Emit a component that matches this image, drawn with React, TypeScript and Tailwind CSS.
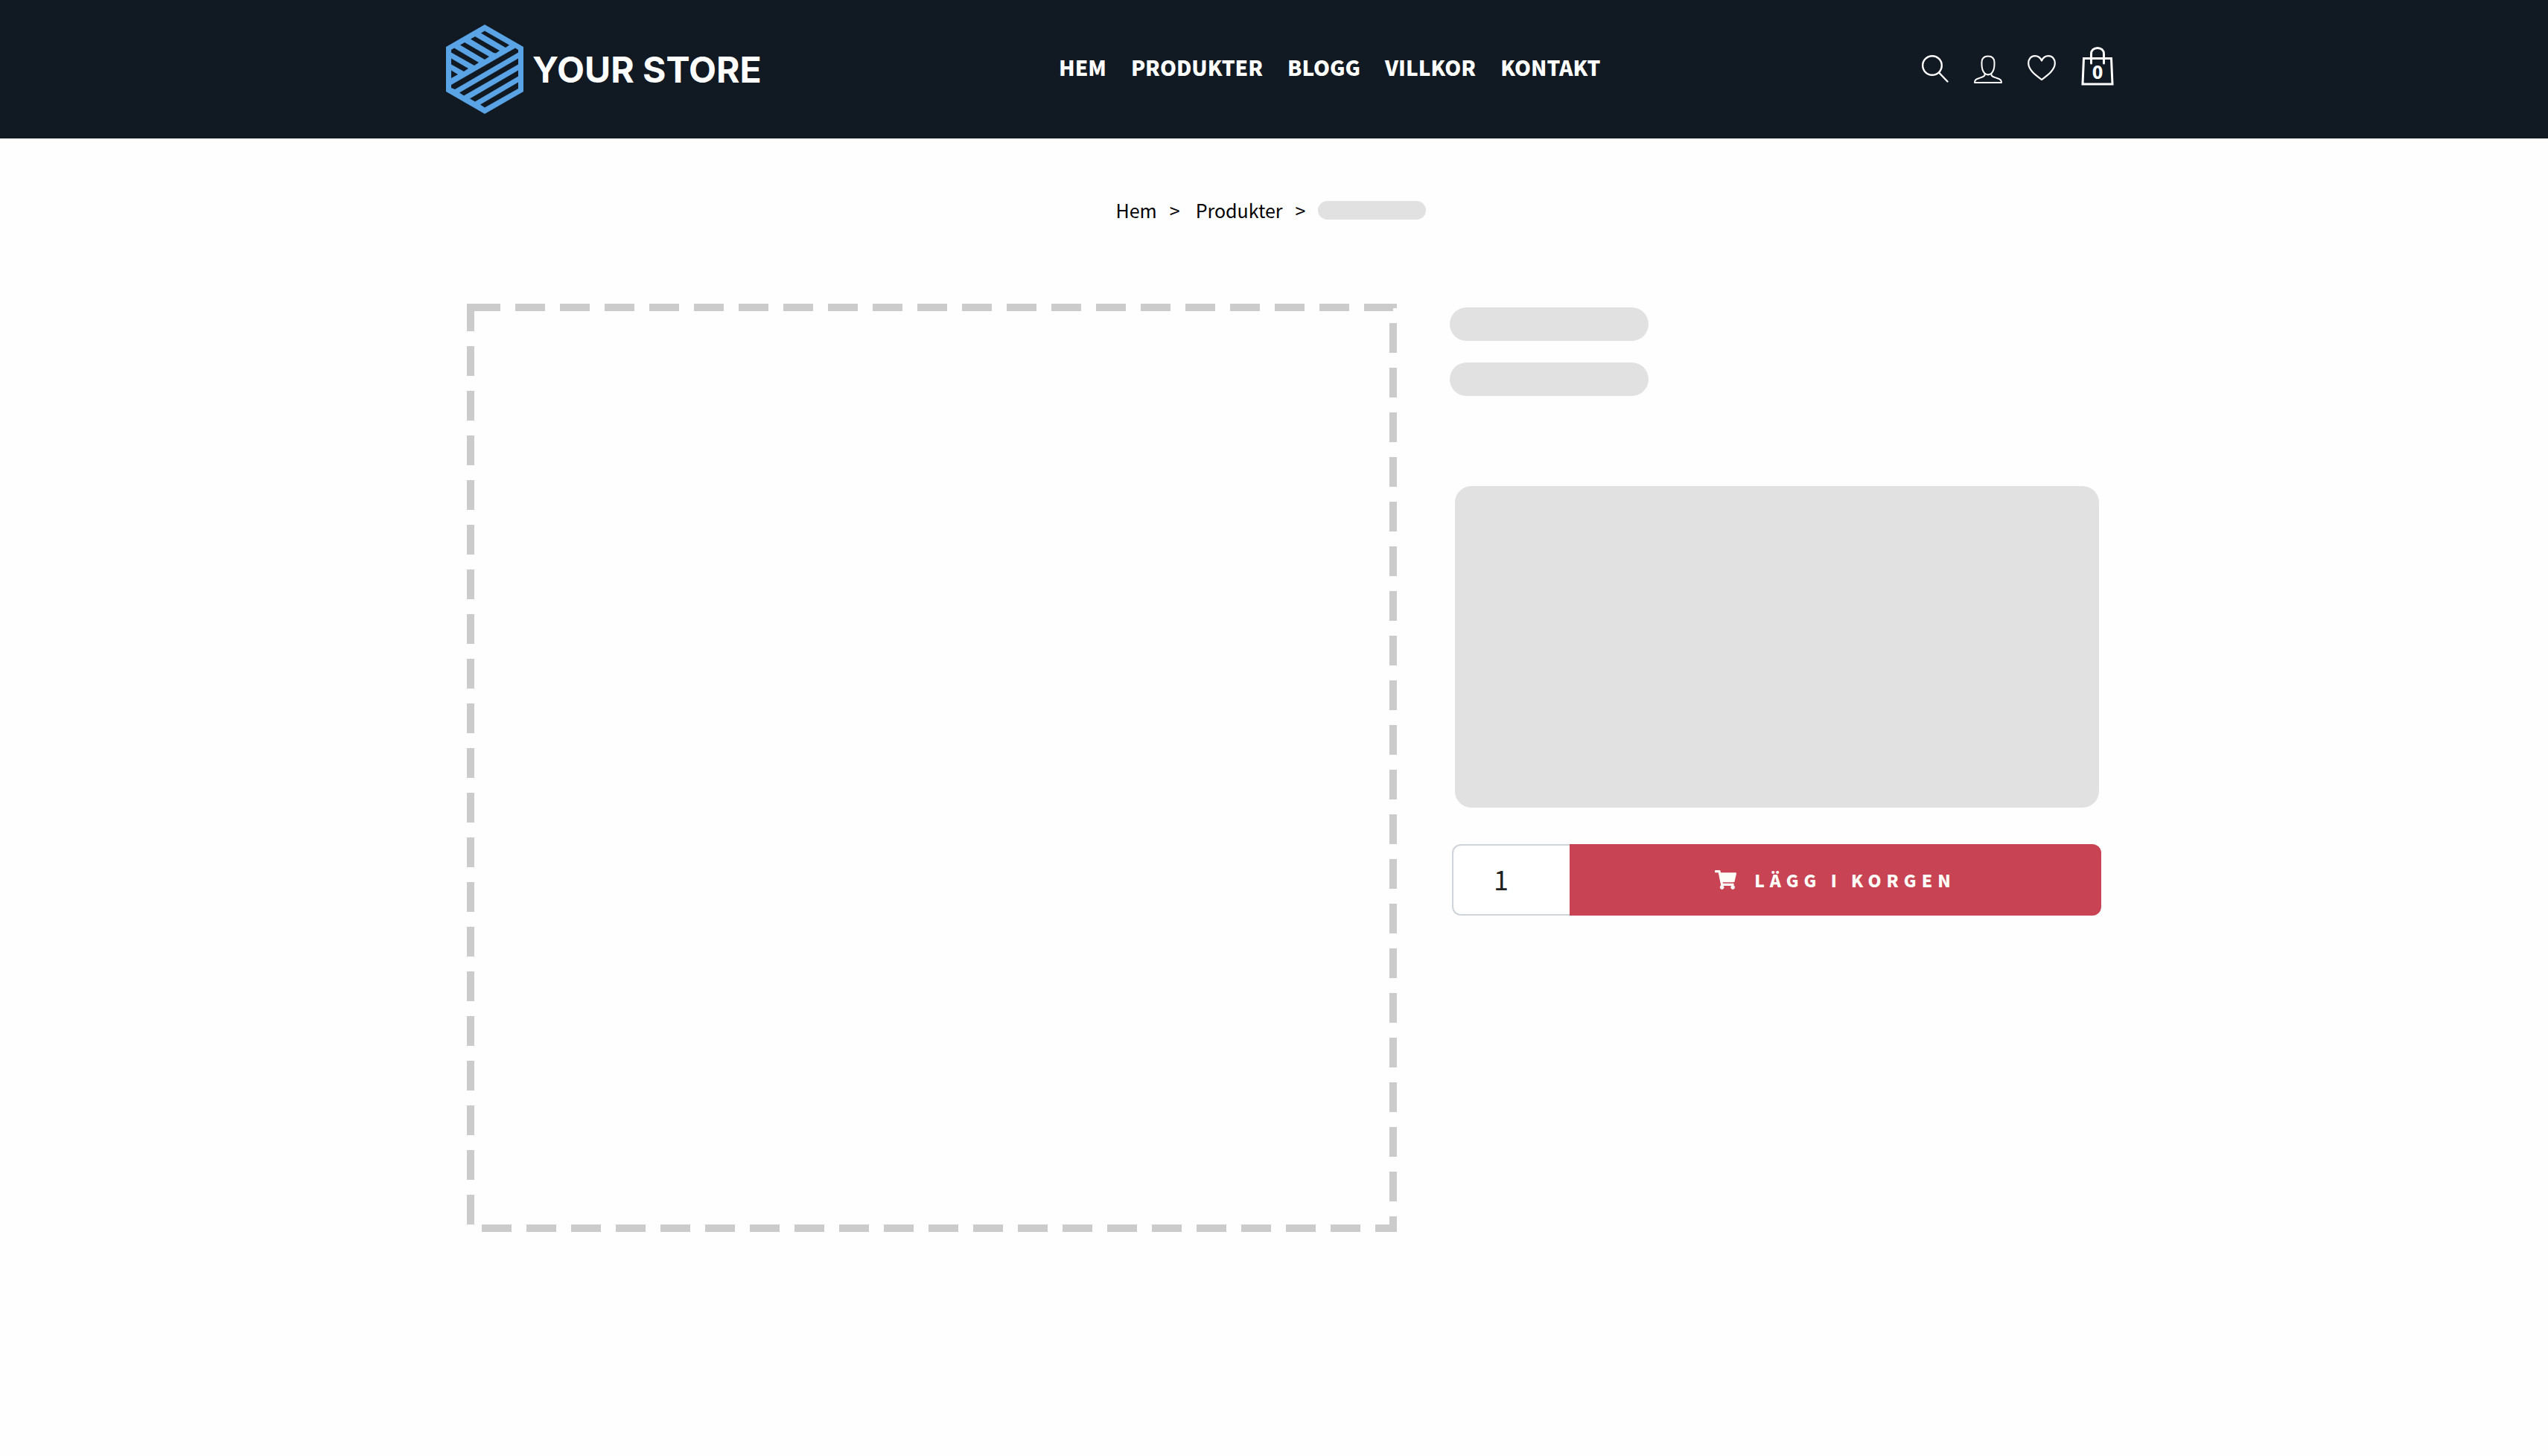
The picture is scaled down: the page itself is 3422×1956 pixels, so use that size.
import React from "react";

const NAV = ["HEM", "PRODUKTER", "BLOGG", "VILLKOR", "KONTAKT"];

function HexLogo() {
  return (
    <svg viewBox="0 0 104 120" className="h-[120px] w-[104px] shrink-0" fill="none" aria-hidden="true">
      <path d="M52 0 104 30V90L52 120 0 90V30Z" fill="#5aa4e6" />
      <g fill="#111923">
        <path d="M47 11.500 52 8.500 85 27.500 80 31Z" />
        <path d="M33 19.500 39 16 72 35 67 38.500 64 38Z" />
        <path d="M19 27.500 25 24 58 43 52 47Z" />
        <path d="M7 34 11 31.500 44 51 38 55 7 37.500Z" />
        <path d="M7 45.500 30 59 24 63 7 53.500Z" />
        <path d="M7 61.500 16 67 7 72Z" />
        <path d="M7 81 93 31.500 97 34V37.500L12 87 7 85Z" />
        <path d="M18 91.500 97 45.500V53.500L24 95.500Z" />
        <path d="M32 99.500 97 61.500V69.500L39 103.500Z" />
        <path d="M46 107.500 97 77.500V86L52 111.500Z" />
      </g>
    </svg>
  );
}

function SearchIcon() {
  return (
    <svg viewBox="0 0 36 38" className="h-[38px] w-9" fill="none" stroke="white" strokeWidth="2.400" strokeLinecap="round">
      <circle cx="14" cy="14" r="12.800" />
      <path d="M23 23.500 34.500 35.500" />
    </svg>
  );
}

function UserIcon() {
  return (
    <svg viewBox="0 0 38 38" className="h-[38px] w-[38px]" fill="none" stroke="white" strokeWidth="2" strokeLinejoin="round">
      <path d="M14.500 24.500C11.500 21.500 10.500 17 10.500 12.500V10C10.500 4.500 13.500 1.500 19 1.500S27.500 4.500 27.500 10V12.500C27.500 17 26.500 21.500 23.500 24.500C20.500 27 17.500 27 14.500 24.500ZM14.500 24.500V27C14 29 11 29.500 7 31C2.500 32.500 1 33.500 1 37H37C37 33.500 35.500 32.500 31 31C27 29.500 24 29 23.500 27V24.500" />
    </svg>
  );
}

function HeartIcon() {
  return (
    <svg viewBox="0 0 38 34" className="h-[34px] w-[38px]" fill="none" stroke="white" strokeWidth="2.200" strokeLinejoin="round">
      <path d="M19 7.500C17 3 13.500 1.200 10 1.200C4.500 1.200 1.200 5.500 1.200 11C1.200 20 11 27 19 33C27 27 36.800 20 36.800 11C36.800 5.500 33.500 1.200 28 1.200C24.500 1.200 21 3 19 7.500Z" />
    </svg>
  );
}

function BagIcon() {
  return (
    <svg viewBox="0 0 44 52" className="h-[52px] w-11" fill="none" stroke="white" strokeWidth="3">
      <path d="M3.500 15.500H40.500L42 50H2Z" />
      <path d="M13.500 22V9.500C13.500 4.500 17 1.500 22 1.500S30.500 4.500 30.500 9.500V22" strokeLinecap="round" />
    </svg>
  );
}

function CartIcon() {
  return (
    <svg viewBox="0 0 576 512" className="h-[26px] w-[29px]" fill="#fffdf8" aria-hidden="true">
      <path d="M528.120 301.319l47.273-208C578.806 78.301 567.391 64 551.990 64H159.208l-9.166-44.810C147.758 8.021 137.930 0 126.529 0H24C10.745 0 0 10.745 0 24v16c0 13.255 10.745 24 24 24h69.883l70.248 343.435C147.325 417.100 136 435.222 136 456c0 30.928 25.072 56 56 56s56-25.072 56-56c0-15.674-6.447-29.835-16.824-40h209.647C430.447 426.165 424 440.326 424 456c0 30.928 25.072 56 56 56s56-25.072 56-56c0-22.172-12.888-41.332-31.579-50.405l5.517-24.276c3.413-15.018-8.002-29.319-23.403-29.319H218.117l-6.545-32h293.145c11.206 0 20.920-7.754 23.403-18.681z" />
    </svg>
  );
}

export default function App() {
  return (
    <div className="min-h-screen bg-[#fefefe] font-['Noto_Sans_CJK_SC',sans-serif] text-black">
      <header className="bg-[#111923] text-white">
        <div className="mx-auto flex h-[186px] max-w-[2256px] items-center pl-4">
          <a href="#" className="flex w-[823px] items-center gap-3">
            <HexLogo />
            <span className="whitespace-nowrap pt-0.5 font-['Inter',sans-serif] text-[48px] font-bold leading-[48px]">YOUR STORE</span>
          </a>
          <nav className="flex gap-[33px] pb-1.5 text-[28px] font-black leading-[44px]">
            {NAV.map((item) => (
              <a key={item} href="#">{item}</a>
            ))}
          </nav>
          <div className="flex flex-1 items-center justify-end gap-[34px]">
            <button type="button" aria-label="Sök"><SearchIcon /></button>
            <button type="button" aria-label="Konto"><UserIcon /></button>
            <button type="button" aria-label="Favoriter" className="pb-1"><HeartIcon /></button>
            <button type="button" aria-label="Varukorg" className="relative pb-2">
              <BagIcon />
              <span className="absolute inset-x-0 top-[18px] text-center text-[24px] font-black leading-[30px]">0</span>
            </button>
          </div>
        </div>
      </header>

      <main className="mx-auto max-w-[2222px]">
        <nav aria-label="Brödsmulor" className="flex items-center justify-center gap-[17px] pr-2 pt-[76px] text-[25px] leading-[40px]">
          <a href="#">Hem</a>
          <span>&gt;</span>
          <a href="#" className="ml-1">Produkter</a>
          <span>&gt;</span>
          <span className="h-[25px] w-[145px] rounded-full bg-[#e1e1e1]" />
        </nav>

        <div className="mt-[106px] flex gap-[71px] pl-[27px]">
          <div className="aspect-[1249/1247] flex-[1249]">
            <svg className="block h-full w-full">
              <rect x="5" y="5" className="h-[calc(100%-10px)] w-[calc(100%-10px)]" fill="none" stroke="#cbcbcb" strokeWidth="10" strokeDasharray="40 20" />
            </svg>
          </div>
          <section className="flex flex-[875] flex-col pt-[5px]">
            <div className="h-[45px] w-[267px] rounded-full bg-[#e1e1e1]" />
            <div className="mt-[29px] h-[45px] w-[267px] rounded-full bg-[#e1e1e1]" />
            <div className="ml-[7px] mr-[3px] mt-[121px] h-[432px] rounded-[22px] bg-[#e1e1e1]" />
            <form className="ml-[3px] mt-[49px] flex h-[96px]">
              <input
                type="text"
                aria-label="Antal"
                defaultValue="1"
                className="w-[158px] rounded-l-[12px] border-2 border-r-0 border-[#ced4da] bg-white pb-1 pl-[54px] text-[36px] text-[#212121]"
              />
              <button type="button" className="flex flex-1 items-center justify-center gap-6 rounded-r-[12px] bg-[#c84354] text-[23px] font-black tracking-[7px] text-[#fffdf8]">
                <CartIcon />
                LÄGG I KORGEN
              </button>
            </form>
          </section>
        </div>
      </main>
    </div>
  );
}
